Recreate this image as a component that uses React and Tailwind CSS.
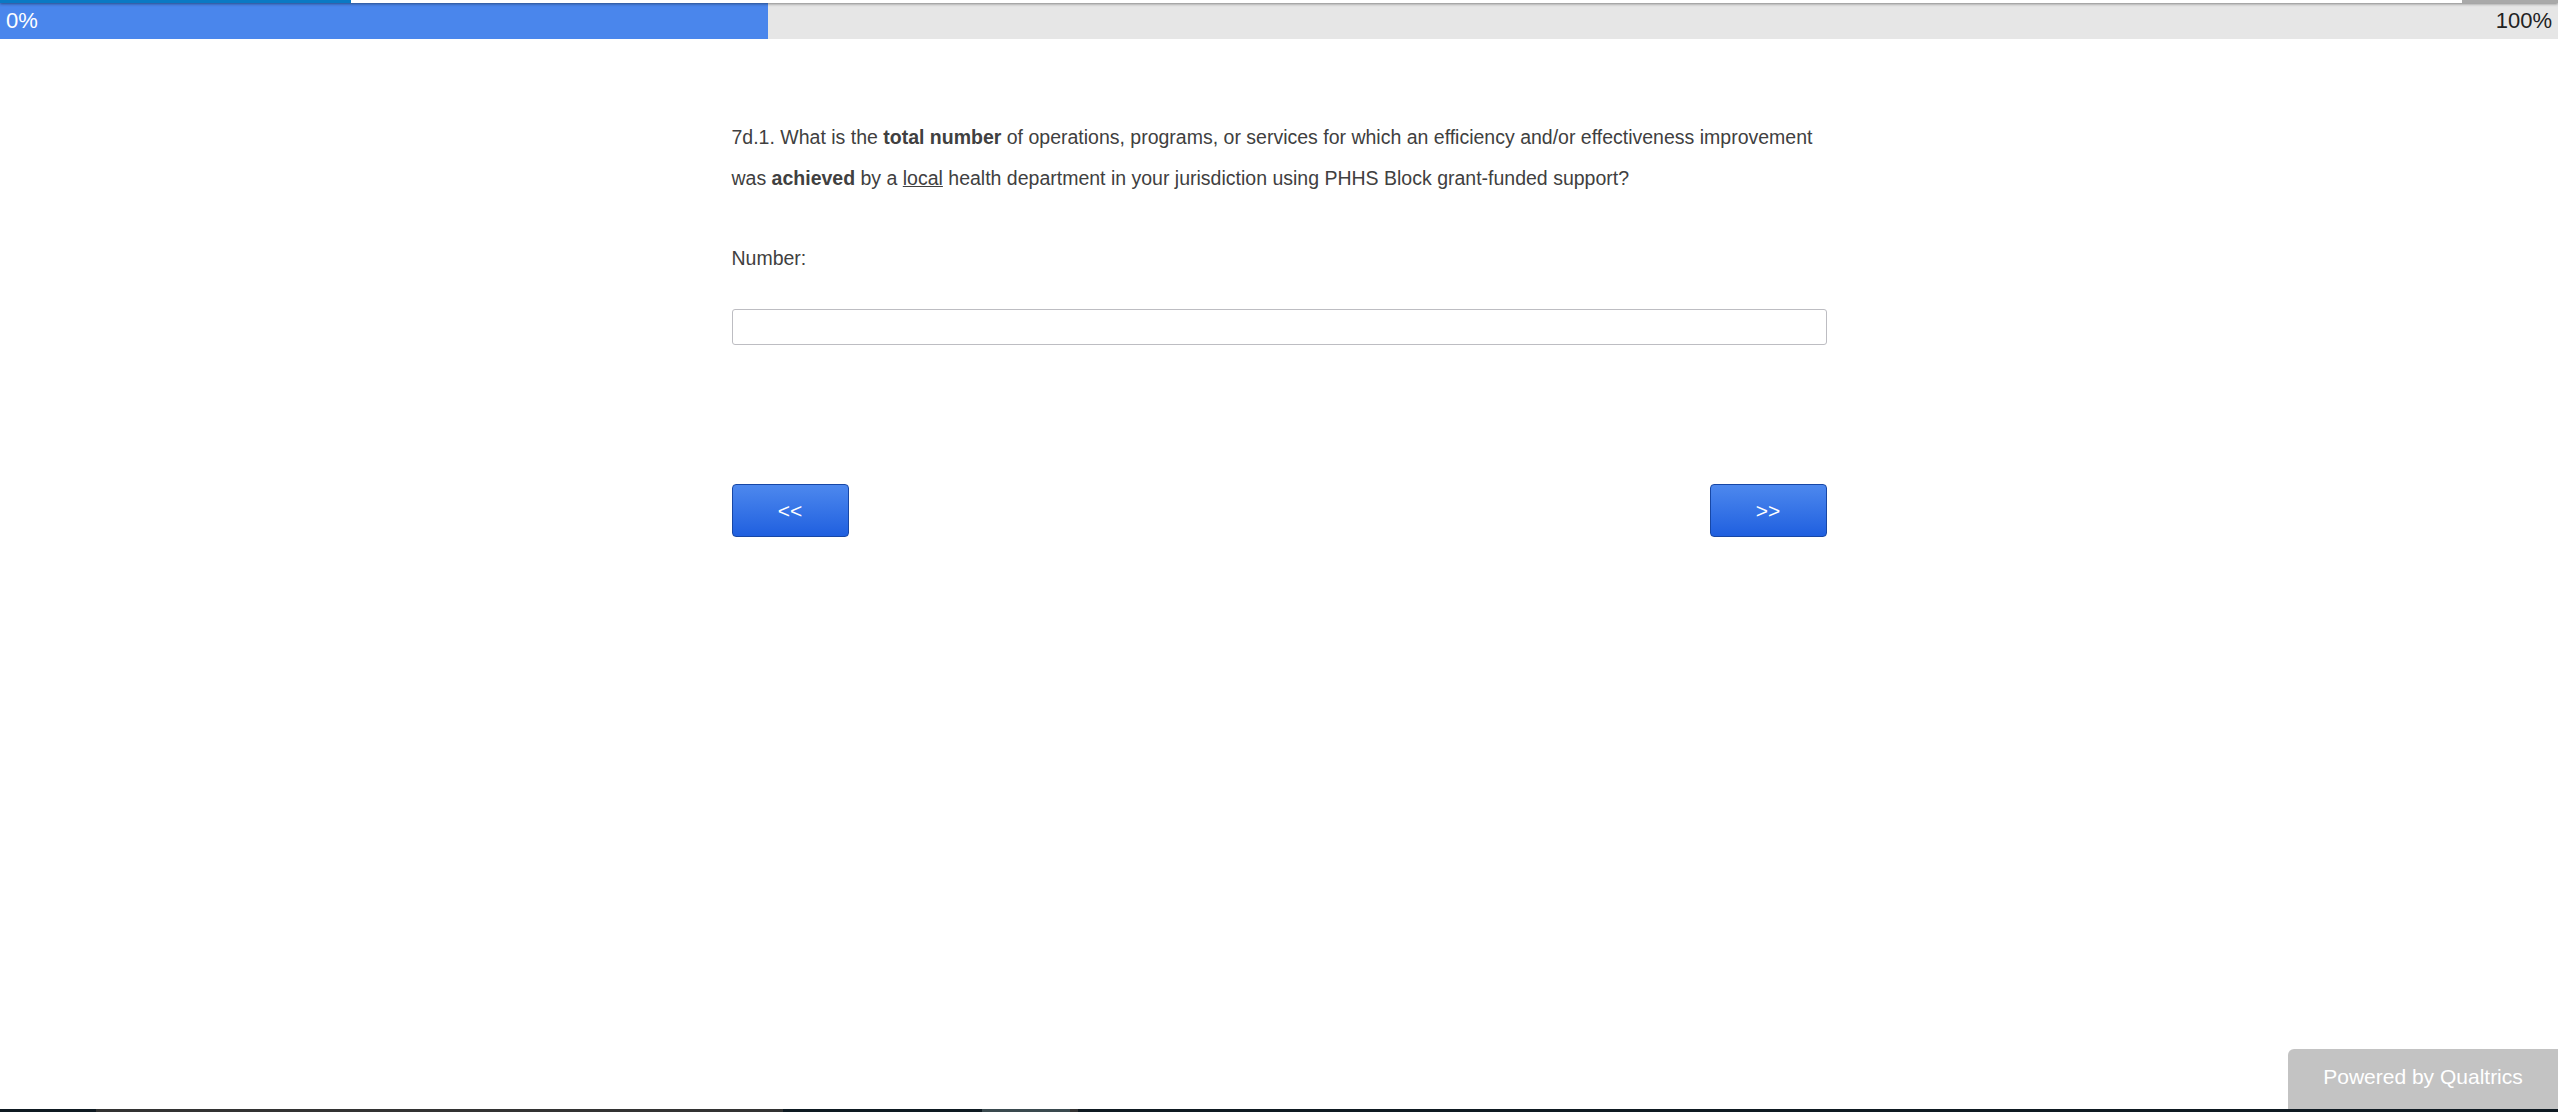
// App.jsx — survey question page (progress bar, question text, number input, nav buttons)

export default function App() {
  return (
    <div className="flex h-[1112px] flex-col bg-white font-['Liberation_Sans',Arial,sans-serif] text-[#404040]">

      {/* top strip */}
      <div className="relative z-10 flex h-[3px] shadow-[0_1px_3px_rgba(0,0,0,0.45)]">
        <div className="w-[351px] bg-[#0a79c4]" />
        <div className="flex-1 bg-white" />
        <div className="w-[96px] bg-[#a9a9a9]" />
      </div>

      {/* progress bar */}
      <div className="relative flex h-[36px] bg-[#e6e6e6]">
        <div className="w-[768px] bg-[#4a86ec]" />
        <span className="absolute left-[6px] top-[5px] text-[22px] leading-[26px] text-white">0%</span>
        <span className="absolute right-[6px] top-[5px] text-[22px] leading-[26px] text-[#222]">100%</span>
      </div>

      {/* question */}
      <main className="mx-auto w-[1095px] pt-[78px]">
        <p className="text-[19.5px] leading-[41px]">
          7d.1. What is the <b>total number</b> of operations, programs, or services for which an efficiency and/or effectiveness improvement was <b>achieved</b> by a <u>local</u> health department in your jurisdiction using PHHS Block grant-funded support?
        </p>

        <p className="mt-[39px] text-[19.5px] leading-[41px]">Number:</p>

        <input
          type="text"
          className="mt-[30px] block h-[36px] w-full rounded-[3px] border border-[#bdbdc2] bg-white px-2 text-[18px] outline-none"
        />

        <div className="mt-[139px] flex justify-between">
          <button className="h-[53px] w-[117px] rounded-[4px] border border-[#1747a6] bg-gradient-to-b from-[#4d88ee] to-[#1f5fdf] text-[21px] text-white">
            &lt;&lt;
          </button>
          <button className="h-[53px] w-[117px] rounded-[4px] border border-[#1747a6] bg-gradient-to-b from-[#4d88ee] to-[#1f5fdf] text-[21px] text-white">
            &gt;&gt;
          </button>
        </div>
      </main>

      {/* footer */}
      <div className="mt-auto flex justify-end">
        <div className="h-[60px] w-[270px] rounded-tl-[6px] bg-[#c3c3c3] pt-[16px] text-center text-[21px] leading-[24px] text-white">
          Powered by Qualtrics
        </div>
      </div>
      <div className="flex h-[3px]">
        <div className="w-[96px] bg-[#0f1a22]" />
        <div className="w-[687px] bg-[#333]" />
        <div className="w-[199px] bg-[#0e1a22]" />
        <div className="w-[88px] bg-[#3a4a4f]" />
        <div className="w-[8px] bg-[#333]" />
        <div className="flex-1 bg-[#0f1a22]" />
      </div>
    </div>
  );
}
